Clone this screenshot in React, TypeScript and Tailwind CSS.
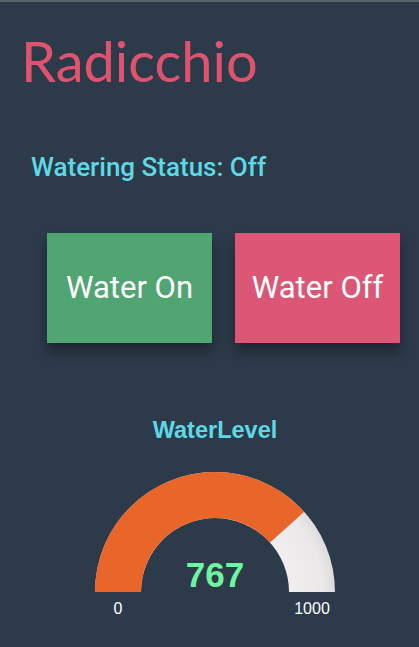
const CX = 215
const CY = 592
const R_OUT = 120
const R_IN = 74
const TOP = 470
const BOTTOM = 600

function arcPath(from: number, to: number): string {
    // angles in degrees, 180 = left, 0 = right
    const p = (r: number, a: number) => {
        const rad = (a * Math.PI) / 180
        return `${CX + r * Math.cos(rad)} ${CY - r * Math.sin(rad)}`
    }
    return `M ${p(R_OUT, from)} A ${R_OUT} ${R_OUT} 0 0 1 ${p(R_OUT, to)} L ${p(R_IN, to)} A ${R_IN} ${R_IN} 0 0 0 ${p(R_IN, from)} Z`
}

function Gauge({ value, max }: { value: number; max: number }) {
    const split = 180 - (value / max) * 180
    return (
        <svg width="419" height={BOTTOM - TOP} viewBox={`0 ${TOP} 419 ${BOTTOM - TOP}`} className="block">
            <defs>
                <radialGradient id="bgShade" cx={CX} cy={CY} r={R_OUT} gradientUnits="userSpaceOnUse">
                    <stop offset="0.62" stopColor="#f0eeef" />
                    <stop offset="0.9" stopColor="#ebe8e9" />
                    <stop offset="1" stopColor="#dedbdc" />
                </radialGradient>
            </defs>
            <path d={arcPath(180, 0)} fill="url(#bgShade)" />
            <path d={arcPath(180, split)} fill="#e8662a" />
            <text x={CX} y={CY - 5} textAnchor="middle" fill="#6ef5a0" fontSize="35" fontWeight="700" fontFamily="'Liberation Sans', Arial, sans-serif">
                {value}
            </text>
        </svg>
    )
}

export default function App() {
    return (
        <div className="min-h-[647px] bg-[#2c3a4a] border-t-2 border-[#5b6168] font-['Roboto',sans-serif]">
            <h1 className="pl-[21px] pt-[24px] text-[56px] leading-[70px] text-[#e0536f] font-['Lato',sans-serif]">
                Radicchio
            </h1>

            <div className="pl-[31px] pt-[56px] text-[26px] leading-[30px] font-medium text-[#5fd8e6]">
                Watering Status: Off
            </div>

            <div className="flex gap-[23px] pl-[47px] pt-[51px]">
                <button className="w-[165px] h-[110px] bg-[#50a572] text-white text-[31px] shadow-[0_8px_12px_rgba(0,0,0,0.35)]">
                    Water On
                </button>
                <button className="w-[165px] h-[110px] bg-[#dc5675] text-white text-[31px] shadow-[0_8px_12px_rgba(0,0,0,0.35)]">
                    Water Off
                </button>
            </div>

            <div className="pt-[74px] font-['Liberation_Sans',Arial,sans-serif]">
                <div className="ml-[11px] w-[408px] text-center text-[23.5px] leading-[26px] font-bold text-[#5fd8e6] mb-[27px]">
                    WaterLevel
                </div>
                <Gauge value={767} max={1000} />
                <div className="flex justify-between w-[240px] ml-[95px] text-[16px] leading-[18px] text-white">
                    <span className="w-[46px] text-center">0</span>
                    <span className="w-[46px] text-center">1000</span>
                </div>
            </div>
        </div>
    )
}
